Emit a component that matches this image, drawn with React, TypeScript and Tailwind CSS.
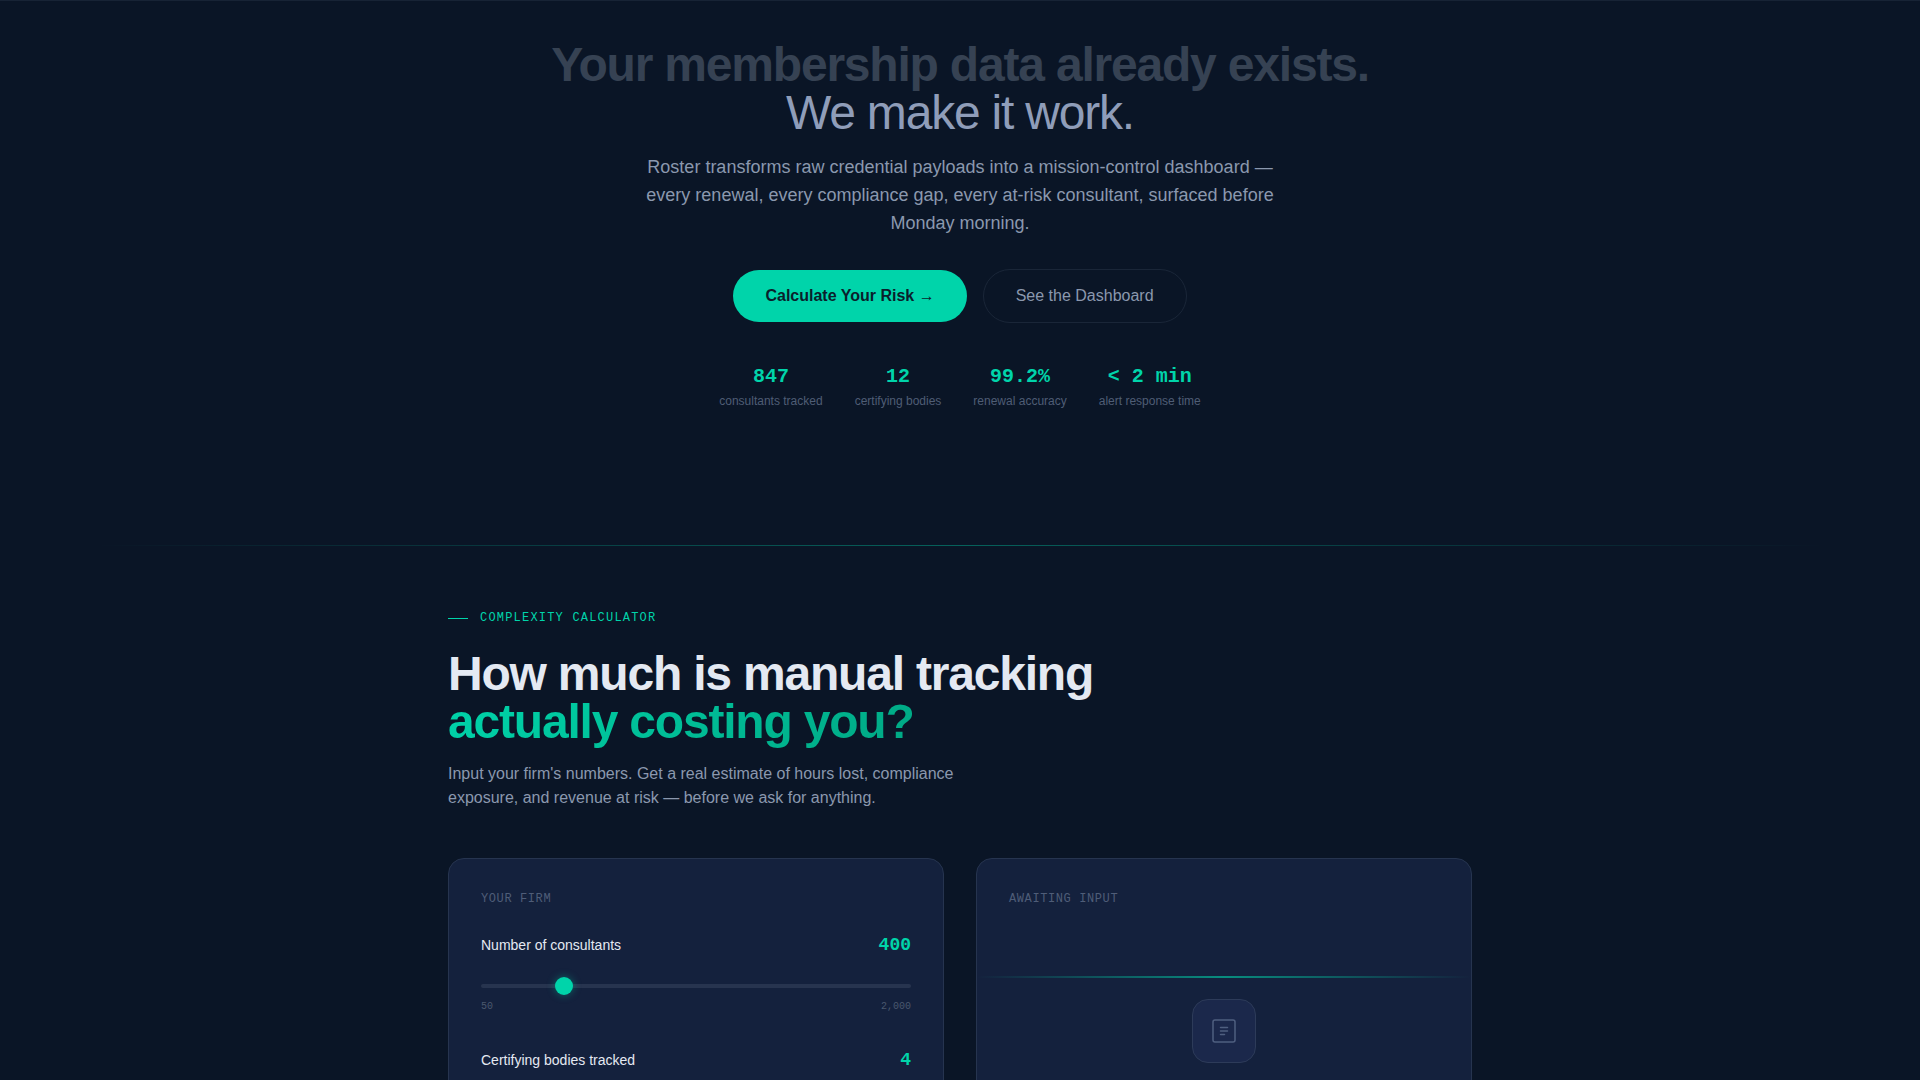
import React, { useState } from 'react';

interface Stat {
  value: string;
  label: string;
}

const stats: Stat[] = [
  { value: '847', label: 'consultants tracked' },
  { value: '12', label: 'certifying bodies' },
  { value: '99.2%', label: 'renewal accuracy' },
  { value: '< 2 min', label: 'alert response time' },
];

const ReportIcon: React.FC = () => (
  <svg width="28" height="28" viewBox="0 0 28 28" fill="none" stroke="#4f5f80" strokeWidth="1.5" strokeLinecap="round" aria-hidden="true">
    <rect x="3" y="3" width="22" height="22" rx="2" />
    <path d="M10.5 10.5h7M10.5 14h7M10.5 17.5h4" />
  </svg>
);

interface SliderFieldProps {
  id: string;
  label: string;
  min: number;
  max: number;
  value: number;
  onChange: (value: number) => void;
}

const SliderField: React.FC<SliderFieldProps> = ({ id, label, min, max, value, onChange }) => (
  <div className="mb-8">
    <div className="flex items-baseline justify-between">
      <label htmlFor={id} className="text-sm text-[#e4e9f2]">{label}</label>
      <output htmlFor={id} className="font-['Liberation_Mono',monospace] text-lg font-bold text-[#00d4aa]">
        {value.toLocaleString('en-US')}
      </output>
    </div>
    <input
      id={id}
      type="range"
      min={min}
      max={max}
      value={value}
      onChange={(e) => onChange(Number(e.target.value))}
      className="mt-[18px] block h-[18px] w-full cursor-pointer appearance-none bg-transparent [&::-webkit-slider-runnable-track]:h-1 [&::-webkit-slider-runnable-track]:rounded-sm [&::-webkit-slider-runnable-track]:bg-[#27344f] [&::-webkit-slider-thumb]:-mt-[7px] [&::-webkit-slider-thumb]:size-[18px] [&::-webkit-slider-thumb]:appearance-none [&::-webkit-slider-thumb]:rounded-full [&::-webkit-slider-thumb]:bg-[#00d4aa] [&::-webkit-slider-thumb]:shadow-[0_0_8px_rgba(0,212,170,0.4)]"
    />
    <div className="mt-1 flex justify-between font-['Liberation_Mono',monospace] text-[10px] leading-[15px] text-[#4a586e]">
      <span>{min.toLocaleString('en-US')}</span>
      <span>{max.toLocaleString('en-US')}</span>
    </div>
  </div>
);

const Hero: React.FC = () => (
  <section className="flex flex-col items-center border-t border-[#172335] px-6 pt-10 text-center">
    <h1 className="text-5xl leading-none font-bold tracking-tight text-[#364253]">
      Your membership data already exists.
      <span className="block font-normal text-[#8f9db9]">We make it work.</span>
    </h1>
    <p className="mt-4 max-w-[640px] text-lg leading-7 text-[#8b98ae]">
      Roster transforms raw credential payloads into a mission-control dashboard — every renewal, every compliance gap, every at-risk consultant, surfaced before Monday morning.
    </p>
    <div className="mt-8 flex flex-wrap items-center justify-center gap-4">
      <a href="#calculator" className="rounded-full bg-[#00d4aa] px-8 py-3.5 font-bold text-[#0a1f2c]">Calculate Your Risk →</a>
      <a href="#dashboard" className="rounded-full border border-[#1a2638] px-8 py-3.5 text-[#8b98ae]">See the Dashboard</a>
    </div>
    <dl className="mt-10 flex flex-wrap justify-center gap-8">
      {stats.map((stat) => (
        <div key={stat.label} className="flex flex-col-reverse gap-0.5">
          <dt className="text-xs text-[#4f5d75]">{stat.label}</dt>
          <dd className="font-['Liberation_Mono',monospace] text-xl font-bold text-[#00d4aa]">{stat.value}</dd>
        </div>
      ))}
    </dl>
  </section>
);

const Calculator: React.FC = () => {
  const [consultants, setConsultants] = useState(400);
  const [bodies, setBodies] = useState(4);

  return (
    <section id="calculator" className="mx-auto max-w-5xl pt-16">
      <div className="flex items-center gap-3 font-['Liberation_Mono',monospace] text-xs tracking-widest text-[#00d4aa]">
        <span className="h-px w-5 bg-[#00d4aa]" />
        COMPLEXITY CALCULATOR
      </div>
      <h2 className="mt-6 text-5xl leading-none font-bold tracking-tight text-[#e4e9f2]">
        How much is manual tracking
        <br />
        <span className="bg-linear-135 from-[#00d4aa] to-[#00a884] bg-clip-text text-transparent">actually costing you?</span>
      </h2>
      <p className="mt-4 max-w-[520px] text-base text-[#8b98ae]">
        Input your firm's numbers. Get a real estimate of hours lost, compliance exposure, and revenue at risk — before we ask for anything.
      </p>

      <div className="mt-12 grid grid-cols-1 gap-8 md:grid-cols-2">
        <form className="rounded-2xl border border-[#26344f] bg-[#14213d] p-8">
          <h3 className="mb-6 font-['Liberation_Mono',monospace] text-xs tracking-wider text-[#4f5d78]">YOUR FIRM</h3>
          <SliderField id="consultants" label="Number of consultants" min={50} max={2000} value={consultants} onChange={setConsultants} />
          <SliderField id="bodies" label="Certifying bodies tracked" min={1} max={12} value={bodies} onChange={setBodies} />
        </form>
        <div className="relative rounded-2xl border border-[#26344f] bg-[#14213d] p-8">
          <h3 className="font-['Liberation_Mono',monospace] text-xs tracking-wider text-[#4f5d78]">AWAITING INPUT</h3>
          {/* scan line */}
          <div className="absolute inset-x-0 top-[117px] h-0.5 bg-[linear-gradient(90deg,transparent,#00d4aa,transparent)] opacity-60" />
          <div className="mt-23 flex justify-center">
            <div className="flex size-16 items-center justify-center rounded-2xl border border-[#2d3b59] bg-[#1b284b]">
              <ReportIcon />
            </div>
          </div>
        </div>
      </div>
    </section>
  );
};

const App: React.FC = () => {
  return (
    <main className="min-h-screen bg-[#0a1526] font-['Liberation_Sans',Arial,sans-serif]">
      <Hero />
      <div className="mt-34 px-[5%]">
        <div className="h-px bg-[linear-gradient(90deg,transparent,#00d4aa,transparent)] opacity-40" />
      </div>
      <Calculator />
    </main>
  );
};

export default App;
